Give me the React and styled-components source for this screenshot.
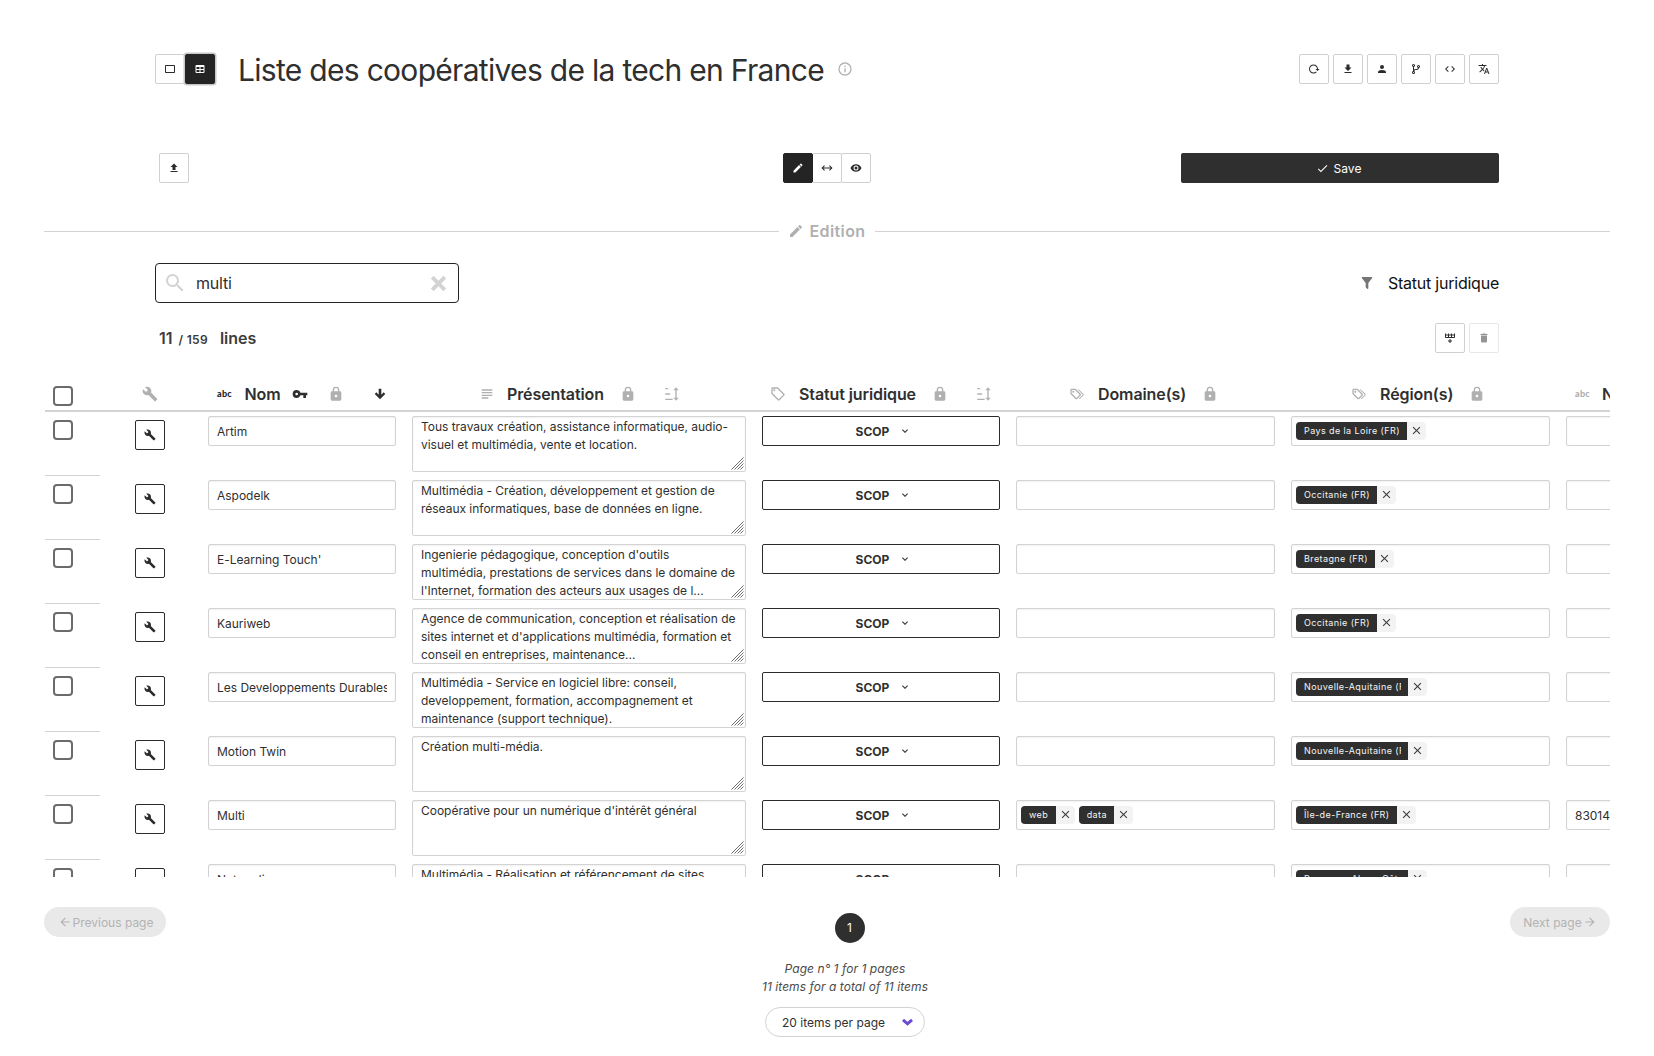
import React from "react";
import styled, { createGlobalStyle, css } from "styled-components";

const Global = createGlobalStyle`
  *, *::before, *::after { box-sizing: border-box; }
  html, body { margin: 0; padding: 0; background: #fff; overflow: hidden; }
  body { font-family: Inter, "Liberation Sans", sans-serif; color: #2f2f2f; font-size: 12px; }
  button, input { font: inherit; color: inherit; }
`;

const PATHS = {
  card: "M20 4H4C2.89 4 2 4.89 2 6V18C2 19.11 2.9 20 4 20H20C21.11 20 22 19.11 22 18V6C22 4.89 21.1 4 20 4M20 18H4V6H20V18Z",
  table: "M5,4H19A2,2 0 0,1 21,6V18A2,2 0 0,1 19,20H5A2,2 0 0,1 3,18V6A2,2 0 0,1 5,4M5,8V12H11V8H5M13,8V12H19V8H13M5,14V18H11V14H5M13,14V18H19V14H13Z",
  info: "M11,9H13V7H11M12,20C7.59,20 4,16.41 4,12C4,7.59 7.59,4 12,4C16.41,4 20,7.59 20,12C20,16.41 16.41,20 12,20M12,2A10,10 0 0,0 2,12A10,10 0 0,0 12,22A10,10 0 0,0 22,12A10,10 0 0,0 12,2M11,17H13V11H11V17Z",
  reload: "M2 12C2 16.97 6.03 21 11 21C13.39 21 15.68 20.06 17.4 18.4L15.9 16.9C14.63 18.25 12.86 19 11 19C4.76 19 1.64 11.46 6.05 7.05C10.46 2.64 18 5.77 18 12H15L19 16H19.1L23 12H20C20 7.03 15.97 3 11 3C6.03 3 2 7.03 2 12Z",
  download: "M5,20H19V18H5M19,9H15V3H9V9H5L12,16L19,9Z",
  upload: "M9,16V10H5L12,3L19,10H15V16H9M5,20V18H19V20H5Z",
  account: "M12,4A4,4 0 0,1 16,8A4,4 0 0,1 12,12A4,4 0 0,1 8,8A4,4 0 0,1 12,4M12,14C16.42,14 20,15.79 20,18V20H4V18C4,15.79 7.58,14 12,14Z",
  branch: "M13,14C9.64,14 8.54,15.35 8.18,16.24C9.25,16.7 10,17.76 10,19A3,3 0 0,1 7,22A3,3 0 0,1 4,19C4,17.69 4.83,16.58 6,16.17V7.83C4.83,7.42 4,6.31 4,5A3,3 0 0,1 7,2A3,3 0 0,1 10,5C10,6.31 9.17,7.42 8,7.83V13.12C8.88,12.47 10.16,12 12,12C14.67,12 15.56,10.66 15.85,9.77C14.77,9.32 14,8.25 14,7A3,3 0 0,1 17,4A3,3 0 0,1 20,7C20,8.34 19.12,9.5 17.91,9.86C17.65,11.29 16.68,14 13,14M7,18A1,1 0 0,0 6,19A1,1 0 0,0 7,20A1,1 0 0,0 8,19A1,1 0 0,0 7,18M7,4A1,1 0 0,0 6,5A1,1 0 0,0 7,6A1,1 0 0,0 8,5A1,1 0 0,0 7,4M17,6A1,1 0 0,0 16,7A1,1 0 0,0 17,8A1,1 0 0,0 18,7A1,1 0 0,0 17,6Z",
  code: "M14.6,16.6L19.2,12L14.6,7.4L16,6L22,12L16,18L14.6,16.6M9.4,16.6L4.8,12L9.4,7.4L8,6L2,12L8,18L9.4,16.6Z",
  translate: "M12.87,15.07L10.33,12.56L10.36,12.53C12.1,10.59 13.34,8.36 14.07,6H17V4H10V2H8V4H1V6H12.17C11.5,7.92 10.44,9.75 9,11.35C8.07,10.32 7.3,9.19 6.69,8H4.69C5.42,9.63 6.42,11.17 7.67,12.56L2.58,17.58L4,19L9,14L12.11,17.11L12.87,15.07M18.5,10H16.5L12,22H14L15.12,19H19.87L21,22H23L18.5,10M15.88,17L17.5,12.67L19.12,17H15.88Z",
  pencil: "M20.71,7.04C21.1,6.65 21.1,6 20.71,5.63L18.37,3.29C18,2.9 17.35,2.9 16.96,3.29L15.12,5.12L18.87,8.87M3,17.25V21H6.75L17.81,9.93L14.06,6.18L3,17.25Z",
  leftRight: "M6.45,17.45L1,12L6.45,6.55L7.86,7.96L4.83,11H19.17L16.14,7.96L17.55,6.55L23,12L17.55,17.45L16.14,16.04L19.17,13H4.83L7.86,16.04L6.45,17.45Z",
  eye: "M12,9A3,3 0 0,0 9,12A3,3 0 0,0 12,15A3,3 0 0,0 15,12A3,3 0 0,0 12,9M12,17A5,5 0 0,1 7,12A5,5 0 0,1 12,7A5,5 0 0,1 17,12A5,5 0 0,1 12,17M12,4.5C7,4.5 2.73,7.61 1,12C2.73,16.39 7,19.5 12,19.5C17,19.5 21.27,16.39 23,12C21.27,7.61 17,4.5 12,4.5Z",
  check: "M21,7L9,19L3.5,13.5L4.91,12.09L9,16.17L19.59,5.59L21,7Z",
  magnify: "M9.5,3A6.5,6.5 0 0,1 16,9.5C16,11.11 15.41,12.59 14.44,13.73L14.71,14H15.5L20.5,19L19,20.5L14,15.5V14.71L13.73,14.44C12.59,15.41 11.11,16 9.5,16A6.5,6.5 0 0,1 3,9.5A6.5,6.5 0 0,1 9.5,3M9.5,5C7,5 5,7 5,9.5C5,12 7,14 9.5,14C12,14 14,12 14,9.5C14,7 12,5 9.5,5Z",
  closeThick: "M20 6.91L17.09 4L12 9.09L6.91 4L4 6.91L9.09 12L4 17.09L6.91 20L12 14.91L17.09 20L20 17.09L14.91 12L20 6.91Z",
  close: "M19,6.41L17.59,5L12,10.59L6.41,5L5,6.41L10.59,12L5,17.59L6.41,19L12,13.41L17.59,19L19,17.59L13.41,12L19,6.41Z",
  filter: "M14,12V19.88C14.04,20.18 13.94,20.5 13.71,20.71C13.32,21.1 12.69,21.1 12.3,20.71L10.29,18.7C10.06,18.47 9.96,18.16 10,17.87V12H9.97L4.21,4.62C3.87,4.19 3.95,3.56 4.38,3.22C4.57,3.08 4.78,3 5,3H19C19.22,3 19.43,3.08 19.62,3.22C20.05,3.56 20.13,4.19 19.79,4.62L14.03,12H14Z",
  rowPlus: "M22,10A2,2 0 0,1 20,12H4A2,2 0 0,1 2,10V3H4V5H8V3H10V5H14V3H16V5H20V3H22V10M4,10H8V7H4V10M10,10H14V7H10V10M20,10V7H16V10H20M11,14H13V17H16V19H13V22H11V19H8V17H11V14Z",
  trash: "M19,4H15.5L14.5,3H9.5L8.5,4H5V6H19M6,19A2,2 0 0,0 8,21H16A2,2 0 0,0 18,19V7H6V19Z",
  wrench: "M22.7,19L13.6,9.9C14.5,7.6 14,4.9 12.1,3C10.1,1 7.1,0.6 4.7,1.7L9,6L6,9L1.6,4.7C0.4,7.1 0.9,10.1 2.9,12.1C4.8,14 7.5,14.5 9.8,13.6L18.9,22.7C19.3,23.1 19.9,23.1 20.3,22.7L22.6,20.4C23.1,20 23.1,19.3 22.7,19Z",
  key: "M7,14A2,2 0 0,1 5,12A2,2 0 0,1 7,10A2,2 0 0,1 9,12A2,2 0 0,1 7,14M12.65,10C11.83,7.67 9.61,6 7,6A6,6 0 0,0 1,12A6,6 0 0,0 7,18C9.61,18 11.83,16.33 12.65,14H17V18H21V14H23V10H12.65Z",
  lock: "M12,17A2,2 0 0,0 14,15C14,13.89 13.1,13 12,13A2,2 0 0,0 10,15A2,2 0 0,0 12,17M18,8A2,2 0 0,1 20,10V20A2,2 0 0,1 18,22H6A2,2 0 0,1 4,20V10C4,8.89 4.9,8 6,8H7V6A5,5 0 0,1 12,1A5,5 0 0,1 17,6V8H18M12,3A3,3 0 0,0 9,6V8H15V6A3,3 0 0,0 12,3Z",
  arrowDown: "M10,4H14V13L17.5,9.5L19.92,11.92L12,19.84L4.08,11.92L6.5,9.5L10,13V4Z",
  text: "M4,5H20V7H4V5M4,9H20V11H4V9M4,13H20V15H4V13M4,17H14V19H4V17Z",
  tag: "M21.41,11.58L12.41,2.58C12.04,2.21 11.53,2 11,2H4A2,2 0 0,0 2,4V11C2,11.53 2.21,12.04 2.59,12.41L11.58,21.41C11.95,21.78 12.47,22 13,22C13.53,22 14.04,21.79 14.41,21.41L21.41,14.41C21.79,14.04 22,13.53 22,13C22,12.47 21.79,11.96 21.41,11.58M13,20L4,11V4H11L20,13M6.5,5A1.5,1.5 0 1,1 5,6.5A1.5,1.5 0 0,1 6.5,5Z",
  tags: "M6.5 10C7.3 10 8 9.3 8 8.5S7.3 7 6.5 7 5 7.7 5 8.5 5.7 10 6.5 10M9 6L16 13L11 18L4 11V6H9M9 4H4C2.9 4 2 4.9 2 6V11C2 11.6 2.2 12.1 2.6 12.4L9.6 19.4C9.9 19.8 10.4 20 11 20S12.1 19.8 12.4 19.4L17.4 14.4C17.8 14 18 13.5 18 13C18 12.4 17.8 11.9 17.4 11.6L10.4 4.6C10.1 4.2 9.6 4 9 4M13.5 5.7L14.5 4.7L21.4 11.6C21.8 12 22 12.5 22 13S21.8 14.1 21.4 14.4L16 19.8L15 18.8L20.7 13L13.5 5.7Z",
  sort: "M2,3H6V5H2V3M2,11H9V13H2V11M2,19H13V21H2V19M18,2L22,6.5H19V17.5H22L18,22L14,17.5H17V6.5H14L18,2Z",
  chevron: "M7.41,8.58L12,13.17L16.59,8.58L18,10L12,16L6,10L7.41,8.58Z",
  arrowLeft: "M20,11V13H8L13.5,18.5L12.08,19.92L4.16,12L12.08,4.08L13.5,5.5L8,11H20Z",
  arrowRight: "M4,11V13H16L10.5,18.5L11.92,19.92L19.84,12L11.92,4.08L10.5,5.5L16,11H4Z",
};

const Glyph = styled.svg`
  display: block;
  flex: none;
  width: ${(p) => p.$size}px;
  height: ${(p) => p.$size}px;
  fill: currentColor;
  color: ${(p) => p.$color || "inherit"};
`;

const Icon = ({ name, size = 12, color }) => (
  <Glyph viewBox="0 0 24 24" $size={size} $color={color} aria-hidden="true">
    <path d={PATHS[name]} />
  </Glyph>
);

const Page = styled.div`
  width: 1654px;
  height: 1056px;
  overflow: hidden;
  display: flex;
  flex-direction: column;
  padding: 54px 44px 0;
`;

const Header = styled.header`
  display: flex;
  align-items: center;
  justify-content: space-between;
  height: 30px;
  padding: 0 111px;
`;

const HeaderLeft = styled.div`
  display: flex;
  align-items: center;
`;

const Title = styled.h1`
  margin: 2px 0 0 23px;
  width: 588px;
  font-size: 30px;
  font-weight: 400;
  line-height: 38px;
  letter-spacing: -0.7px;
  white-space: nowrap;
`;

const InfoMark = styled.span`
  margin-left: 11px;
`;

const ButtonRow = styled.div`
  display: flex;
  gap: ${(p) => p.$gap || 0}px;
`;

const JoinedRow = styled.div`
  display: flex;
  margin-right: 4px;

  & > * + * {
    margin-left: -1px;
  }
`;

const SquareButton = styled.button`
  display: flex;
  align-items: center;
  justify-content: center;
  width: 30px;
  height: 30px;
  padding: 0;
  border: 1px solid ${(p) => (p.$strong ? "#2b2b2b" : "#d0d0d0")};
  border-radius: 2px;
  background: #fff;
  color: #2b2b2b;
  ${(p) =>
    p.$disabled &&
    css`
      opacity: 0.5;
    `}
  ${(p) =>
    p.$active &&
    css`
      position: relative;
      background: #242424;
      border-color: #242424;
      color: #fff;
    `}
  ${(p) =>
    p.$focused &&
    css`
      box-shadow: 0 0 0 1.5px #c8c8c8;
    `}
`;

const Toolbar = styled.div`
  display: grid;
  grid-template-columns: 1fr auto 1fr;
  align-items: center;
  margin-top: 69px;
  padding: 0 111px 0 115px;
`;

const SaveButton = styled.button`
  justify-self: end;
  display: flex;
  align-items: center;
  justify-content: center;
  gap: 5px;
  width: 318px;
  height: 30px;
  padding: 0 3px 0 0;
  border: 0;
  border-radius: 2px;
  background: #2f2f2f;
  color: #fff;
  font-size: 12px;
`;

const SectionRule = styled.div`
  display: flex;
  align-items: center;
  margin-top: 36px;
  height: 24px;
  color: #b0b0b0;
  font-size: 16px;
  font-weight: 600;
  letter-spacing: 0.4px;

  &::before,
  &::after {
    content: "";
    flex: 1;
    height: 1px;
    background: #d3d3d3;
  }
`;

const SectionLabel = styled.span`
  display: flex;
  align-items: center;
  gap: 5px;
  padding: 0 9px;
`;

const SearchRow = styled.div`
  display: flex;
  justify-content: space-between;
  align-items: center;
  margin-top: 20px;
  padding: 0 111px;
`;

const SearchBox = styled.label`
  display: flex;
  align-items: center;
  width: 304px;
  height: 40px;
  padding: 0 8px 0 7px;
  border: 1px solid #242424;
  border-radius: 4px;
`;

const SearchInput = styled.input`
  flex: 1;
  min-width: 0;
  margin-left: 9px;
  padding: 0;
  border: 0;
  outline: 0;
  font-size: 16px;
  letter-spacing: -0.2px;
`;

const FilterLabel = styled.div`
  display: flex;
  align-items: center;
  gap: 13px;
  color: #111;
  font-size: 16px;
  letter-spacing: -0.23px;
`;

const CountRow = styled.div`
  display: flex;
  justify-content: space-between;
  align-items: center;
  margin-top: 20px;
  padding: 0 111px 0 115px;
`;

const Count = styled.div`
  display: flex;
  align-items: baseline;
  padding-top: 1px;
  font-size: 16px;
  font-weight: 600;
  line-height: 24px;
  color: #3c3c3c;

  small {
    margin: 0 12px 0 6px;
    font-size: 12px;
    letter-spacing: 0.3px;
  }
`;

const TableFrame = styled.div`
  width: 1565px;
  height: 502px;
  margin: 22px 0 0 1px;
  overflow: hidden;
`;

const COLUMNS = "55px 100px 204px 350px 254px 275px 275px 240px";

const HeadRow = styled.div`
  display: grid;
  grid-template-columns: ${COLUMNS};
  width: 1753px;
  height: 37px;
  border-bottom: 2px solid #d3d3d3;
`;

const HeadCell = styled.div`
  display: flex;
  align-items: center;
  justify-content: ${(p) => (p.$start ? "flex-start" : "center")};
  height: 37px;
  padding: ${(p) => p.$pad || "0"};
`;

const HeadText = styled.span`
  margin: 0 ${(p) => p.$after}px 0 ${(p) => p.$before}px;
  font-size: 16px;
  font-weight: 600;
  letter-spacing: -0.1px;
  white-space: nowrap;
`;

const AbcMark = styled.span`
  width: 15px;
  font-family: Lato, sans-serif;
  font-size: 9px;
  font-weight: 900;
  line-height: 12px;
  letter-spacing: 0.3px;
  color: ${(p) => p.$color};
`;

const Gap = styled.span`
  flex: none;
  width: ${(p) => p.$w}px;
`;

const Checkbox = styled.span`
  display: block;
  width: 20px;
  height: 20px;
  border: 2px solid #6b6b6b;
  border-radius: 4px;
  background: #fff;
`;

const Row = styled.div`
  display: grid;
  grid-template-columns: ${COLUMNS};
  width: 1753px;
  height: 64px;
`;

const CheckCell = styled.div`
  padding: 8px 0 0 8px;
  border-bottom: 1px solid #d3d3d3;
`;

const ToolCell = styled.div`
  display: flex;
  padding: 8px 0 0 35px;
`;

const Cell = styled.div`
  padding: 4px 8px 0;
`;

const fieldBase = css`
  border: 1px solid #d3d3d3;
  border-radius: 2px;
  background: #fff;
  box-shadow: inset 0 1px 2px rgba(10, 10, 10, 0.06);
`;

const TextField = styled.div`
  ${fieldBase}
  height: 30px;
  padding: 0 8px;
  line-height: 29px;
  letter-spacing: -0.02px;
  white-space: nowrap;

  span {
    display: block;
    overflow: hidden;
  }
`;

const TextArea = styled.div`
  ${fieldBase}
  position: relative;
  height: 56px;
  padding: 1px 8px 0;
  overflow: hidden;
  line-height: 18px;
  letter-spacing: -0.02px;
  white-space: pre;
`;

const Resizer = styled.svg`
  position: absolute;
  right: 1px;
  bottom: 1px;
  width: 13px;
  height: 13px;
  stroke: #6f6f6f;
  stroke-width: 1;
`;

const StatusButton = styled.button`
  display: flex;
  align-items: center;
  justify-content: center;
  gap: 10px;
  width: 100%;
  height: 30px;
  padding: 0 0 0 5px;
  border: 1px solid #2b2b2b;
  border-radius: 2px;
  background: #fff;
  font-size: 12px;
  font-weight: 700;
`;

const TagField = styled.div`
  ${fieldBase}
  display: flex;
  align-items: center;
  gap: 4px;
  height: 30px;
  padding: 0 4px 1px;
`;

const Tag = styled.span`
  display: flex;
  height: 18px;
  border-radius: 4px;
  overflow: hidden;
  background: #f3f3f3;
`;

const TagText = styled.span`
  max-width: 112px;
  padding: 0 7.5px 0 8px;
  background: #2f2f2f;
  color: #f5f5f5;
  font-size: 9px;
  line-height: 17px;
  letter-spacing: 0.4px;
  white-space: nowrap;

  span {
    display: block;
    overflow: hidden;
  }
`;

const TagRemove = styled.span`
  display: flex;
  align-items: center;
  justify-content: center;
  width: 19px;
  color: #3c3c3c;
`;

const Pager = styled.nav`
  display: flex;
  justify-content: space-between;
  align-items: flex-start;
  margin-top: 30px;
`;

const PageLink = styled.button`
  display: flex;
  align-items: center;
  justify-content: center;
  gap: 1px;
  width: ${(p) => p.$w}px;
  height: 30px;
  padding: ${(p) => p.$pad};
  border: 0;
  border-radius: 15px;
  background: #e9e9e9;
  color: #b3b3b3;
  font-size: 12px;
`;

const PageCenter = styled.div`
  display: flex;
  flex-direction: column;
  align-items: center;
  width: 170px;
  margin-left: 14px;
  padding-top: 6px;
`;

const PageNumber = styled.span`
  width: 30px;
  height: 30px;
  margin-left: 9px;
  border-radius: 50%;
  background: #2f2f2f;
  color: #fff;
  line-height: 30px;
  text-align: center;
`;

const Summary = styled.p`
  margin: 17px 0 0;
  color: #4a4a4a;
  font-style: italic;
  line-height: 18px;
  letter-spacing: 0.06px;
  text-align: center;
  white-space: nowrap;
`;

const PageSize = styled.div`
  display: flex;
  align-items: center;
  justify-content: space-between;
  width: 160px;
  height: 30px;
  margin-top: 11px;
  padding: 0 11px 0 16px;
  border: 1px solid #d3d3d3;
  border-radius: 15px;
`;

const PageSizeArrow = styled.svg`
  width: 11px;
  height: 8px;
  fill: none;
  stroke: #6b4bd3;
  stroke-width: 3;
`;

const GREY = "#b0b0b0";

const ROWS = [
  { name: "Artim", text: "Tous travaux création, assistance informatique, audio-\nvisuel et multimédia, vente et location.", regions: ["Pays de la Loire (FR)"] },
  { name: "Aspodelk", text: "Multimédia - Création, développement et gestion de\nréseaux informatiques, base de données en ligne.", regions: ["Occitanie (FR)"] },
  { name: "E-Learning Touch'", text: "Ingenierie pédagogique, conception d'outils\nmultimédia, prestations de services dans le domaine de\nl'Internet, formation des acteurs aux usages de l...", regions: ["Bretagne (FR)"] },
  { name: "Kauriweb", text: "Agence de communication, conception et réalisation de\nsites internet et d'applications multimédia, formation et\nconseil en entreprises, maintenance...", regions: ["Occitanie (FR)"] },
  { name: "Les Developpements Durables", text: "Multimédia - Service en logiciel libre: conseil,\ndeveloppement, formation, accompagnement et\nmaintenance (support technique).", regions: ["Nouvelle-Aquitaine (FR)"] },
  { name: "Motion Twin", text: "Création multi-média.", regions: ["Nouvelle-Aquitaine (FR)"] },
  { name: "Multi", text: "Coopérative pour un numérique d'intérêt général", domains: ["web", "data"], regions: ["Île-de-France (FR)"], number: "83014" },
  { name: "Netmedia", text: "Multimédia - Réalisation et référencement de sites", regions: ["Provence-Alpes-Côte d'Azur (FR)"] },
];

const TagList = ({ items = [] }) => (
  <TagField>
    {items.map((item) => (
      <Tag key={item}>
        <TagText>
          <span>{item}</span>
        </TagText>
        <TagRemove>
          <Icon name="close" size={13} />
        </TagRemove>
      </Tag>
    ))}
  </TagField>
);

const TableRow = ({ row }) => (
  <Row>
    <CheckCell>
      <Checkbox />
    </CheckCell>
    <ToolCell>
      <SquareButton $strong>
        <Icon name="wrench" size={12} />
      </SquareButton>
    </ToolCell>
    <Cell>
      <TextField>
        <span>{row.name}</span>
      </TextField>
    </Cell>
    <Cell>
      <TextArea>
        {row.text}
        <Resizer viewBox="0 0 13 13">
          <path d="M0.5 12.5L12.5 0.5M3.5 12.5L12.5 3.5M6.5 12.5L12.5 6.5M9.5 12.5L12.5 9.5" />
        </Resizer>
      </TextArea>
    </Cell>
    <Cell>
      <StatusButton>
        SCOP
        <Icon name="chevron" size={12} />
      </StatusButton>
    </Cell>
    <Cell>
      <TagList items={row.domains} />
    </Cell>
    <Cell>
      <TagList items={row.regions} />
    </Cell>
    <Cell>
      <TextField>
        <span>{row.number}</span>
      </TextField>
    </Cell>
  </Row>
);

export default function App() {
  return (
    <>
      <Global />
      <Page>
        <Header>
          <HeaderLeft>
            <ButtonRow>
              <SquareButton>
                <Icon name="card" />
              </SquareButton>
              <SquareButton $active $focused>
                <Icon name="table" />
              </SquareButton>
            </ButtonRow>
            <Title>Liste des coopératives de la tech en France</Title>
            <InfoMark>
              <Icon name="info" size={16} color={GREY} />
            </InfoMark>
          </HeaderLeft>
          <ButtonRow $gap={4}>
            {["reload", "download", "account", "branch", "code", "translate"].map((name) => (
              <SquareButton key={name}>
                <Icon name={name} />
              </SquareButton>
            ))}
          </ButtonRow>
        </Header>

        <Toolbar>
          <SquareButton>
            <Icon name="upload" />
          </SquareButton>
          <JoinedRow>
            <SquareButton $active>
              <Icon name="pencil" />
            </SquareButton>
            <SquareButton>
              <Icon name="leftRight" />
            </SquareButton>
            <SquareButton>
              <Icon name="eye" />
            </SquareButton>
          </JoinedRow>
          <SaveButton>
            <Icon name="check" size={13} />
            Save
          </SaveButton>
        </Toolbar>

        <SectionRule>
          <SectionLabel>
            <Icon name="pencil" size={16} />
            Edition
          </SectionLabel>
        </SectionRule>

        <SearchRow>
          <SearchBox>
            <Icon name="magnify" size={24} color="#d3d3d3" />
            <SearchInput defaultValue="multi" />
            <Icon name="closeThick" size={23} color="#d3d3d3" />
          </SearchBox>
          <FilterLabel>
            <Icon name="filter" size={16} color="#757575" />
            Statut juridique
          </FilterLabel>
        </SearchRow>

        <CountRow>
          <Count>
            11<small>/ 159</small>lines
          </Count>
          <ButtonRow $gap={4}>
            <SquareButton>
              <Icon name="rowPlus" />
            </SquareButton>
            <SquareButton $disabled>
              <Icon name="trash" />
            </SquareButton>
          </ButtonRow>
        </CountRow>

        <TableFrame>
          <HeadRow>
            <HeadCell $start $pad="4px 0 0 8px">
              <Checkbox />
            </HeadCell>
            <HeadCell>
              <Icon name="wrench" size={16} color={GREY} />
            </HeadCell>
            <HeadCell $start $pad="0 0 0 17px">
              <AbcMark $color="#242424">abc</AbcMark>
              <HeadText $before={12.5} $after={11.5}>Nom</HeadText>
              <Icon name="key" size={16} />
              <Gap $w={20} />
              <Icon name="lock" size={16} color={GREY} />
              <Gap $w={28} />
              <Icon name="arrowDown" size={16} />
            </HeadCell>
            <HeadCell $start $pad="0 0 0 75px">
              <Icon name="text" size={16} color={GREY} />
              <HeadText $before={12} $after={16}>Présentation</HeadText>
              <Icon name="lock" size={16} color={GREY} />
              <Gap $w={28} />
              <Icon name="sort" size={16} color={GREY} />
            </HeadCell>
            <HeadCell $start $pad="0 0 0 16px">
              <Icon name="tag" size={16} color={GREY} />
              <HeadText $before={13} $after={16}>Statut juridique</HeadText>
              <Icon name="lock" size={16} color={GREY} />
              <Gap $w={28} />
              <Icon name="sort" size={16} color={GREY} />
            </HeadCell>
            <HeadCell $start $pad="0 0 0 61px">
              <Icon name="tags" size={16} color={GREY} />
              <HeadText $before={13} $after={16}>Domaine(s)</HeadText>
              <Icon name="lock" size={16} color={GREY} />
            </HeadCell>
            <HeadCell $start $pad="0 0 0 68px">
              <Icon name="tags" size={16} color={GREY} />
              <HeadText $before={13} $after={16}>Région(s)</HeadText>
              <Icon name="lock" size={16} color={GREY} />
            </HeadCell>
            <HeadCell $start $pad="0 0 0 17px">
              <AbcMark $color={GREY}>abc</AbcMark>
              <HeadText $before={12} $after={16}>Numéro</HeadText>
            </HeadCell>
          </HeadRow>
          {ROWS.map((row) => (
            <TableRow key={row.name} row={row} />
          ))}
        </TableFrame>

        <Pager>
          <PageLink $w={122} $pad="0 0 0 1px">
            <Icon name="arrowLeft" size={14} />
            Previous page
          </PageLink>
          <PageCenter>
            <PageNumber>1</PageNumber>
            <Summary>
              Page n° 1 for 1 pages
              <br />
              11 items for a total of 11 items
            </Summary>
            <PageSize>
              20 items per page
              <PageSizeArrow viewBox="0 0 11 8">
                <path d="M1 1.8L5.5 5.8L10 1.8" />
              </PageSizeArrow>
            </PageSize>
          </PageCenter>
          <PageLink $w={100} $pad="0">
            Next page
            <Icon name="arrowRight" size={14} />
          </PageLink>
        </Pager>
      </Page>
    </>
  );
}
